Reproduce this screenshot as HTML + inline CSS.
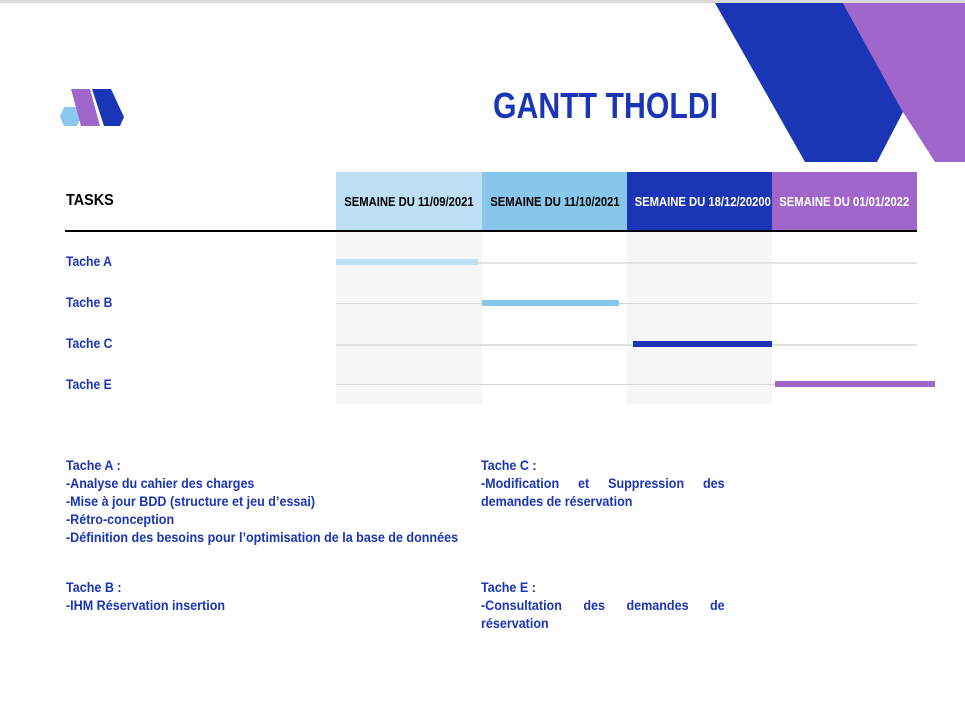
<!DOCTYPE html>
<html><head><meta charset="utf-8"><style>
*{margin:0;padding:0;box-sizing:border-box}
body{width:965px;height:722px;background:#fff;position:relative;overflow:hidden;font-family:"Liberation Sans",sans-serif;font-weight:bold;color:#1a35b5}
.abs{position:absolute}
.top{left:0;top:0;width:965px;height:3px;background:#d9d9d9}
.hd{position:absolute;top:172px;height:59px;width:146px;line-height:59px;text-align:center;white-space:nowrap;color:#000;font-weight:bold}
.hd span{display:inline-block;font-size:12.5px;transform:scaleX(0.9)}
.shade{position:absolute;top:232px;height:172px;background:#f6f6f6}
.row{position:absolute;left:336px;width:581px;height:1px;background:#d6d6d6}
.bar{position:absolute;height:6px}
.lbl{position:absolute;left:66px;font-size:13.5px;transform:scaleX(0.9);transform-origin:left}
.note{position:absolute;font-size:13.5px;line-height:18px;transform:scaleX(0.93);transform-origin:left top;white-space:nowrap}
.just{text-align:justify;text-align-last:left;width:262px;white-space:normal}
</style></head><body>
<div class="abs top"></div>
<svg class="abs" style="left:0;top:0" width="965" height="170">
<polygon points="715,3 843,3 903,112 877,162 805,162" fill="#1a35b5"/>
<polygon points="843,3 965,3 965,162 935,162 903,112" fill="#a066cc"/>
<polygon points="64,107 77,107 81,116.5 77,126 64,126 60,116.5" fill="#8ac8ee"/>
<polygon points="71,89 90,89 100,126 81,126" fill="#a066cc"/>
<polygon points="92,89 111,89 124,117 120,126 104,126" fill="#1a35b5"/>
</svg>
<div class="abs" style="left:493px;top:85px;font-size:36px;color:#1a35b5;font-weight:bold;transform:scaleX(0.84);transform-origin:left;white-space:nowrap">GANTT THOLDI</div>
<div class="abs" style="left:66px;top:192px;font-size:16px;color:#000;transform:scaleX(0.9);transform-origin:left">TASKS</div>
<div class="hd" style="left:336px;background:#bde0f4"><span>SEMAINE DU 11/09/2021</span></div>
<div class="hd" style="left:482px;width:145px;background:#87c7ec"><span>SEMAINE DU 11/10/2021</span></div>
<div class="hd" style="left:627px;width:145px;background:#1a35b5;color:#fff"><span>SEMAINE DU 18/12/20200</span></div>
<div class="hd" style="left:772px;width:145px;background:#a066cc;color:#fff"><span>SEMAINE DU 01/01/2022</span></div>
<div class="abs" style="left:65px;top:230px;width:852px;height:2px;background:#000"></div>
<div class="shade" style="left:336px;width:146px"></div>
<div class="shade" style="left:627px;width:145px"></div>
<div class="row" style="top:262px;height:2px;background:#e3e3e3"></div>
<div class="row" style="top:303px"></div>
<div class="row" style="top:344px;height:2px;background:#e0e0e0"></div>
<div class="row" style="top:384px"></div>
<div class="bar" style="left:336px;top:259px;width:142px;background:#bde0f4"></div>
<div class="bar" style="left:482px;top:300px;width:137px;background:#87c7ec"></div>
<div class="bar" style="left:633px;top:341px;width:139px;background:#1a35b5"></div>
<div class="bar" style="left:775px;top:381px;width:160px;background:#a066cc"></div>
<div class="lbl" style="top:254px">Tache A</div>
<div class="lbl" style="top:295px">Tache B</div>
<div class="lbl" style="top:336px">Tache C</div>
<div class="lbl" style="top:377px">Tache E</div>
<div class="note" style="left:66px;top:457px">Tache A :<br>-Analyse du cahier des charges<br>-Mise à jour BDD (structure et jeu d’essai)<br>-Rétro-conception<br>-Définition des besoins pour l’optimisation de la base de données</div>
<div class="note" style="left:66px;top:579px">Tache B :<br>-IHM Réservation insertion</div>
<div class="note just" style="left:481px;top:457px">Tache C :<br>-Modification et Suppression des demandes de réservation</div>
<div class="note just" style="left:481px;top:579px">Tache E :<br>-Consultation des demandes de réservation</div>
</body></html>
